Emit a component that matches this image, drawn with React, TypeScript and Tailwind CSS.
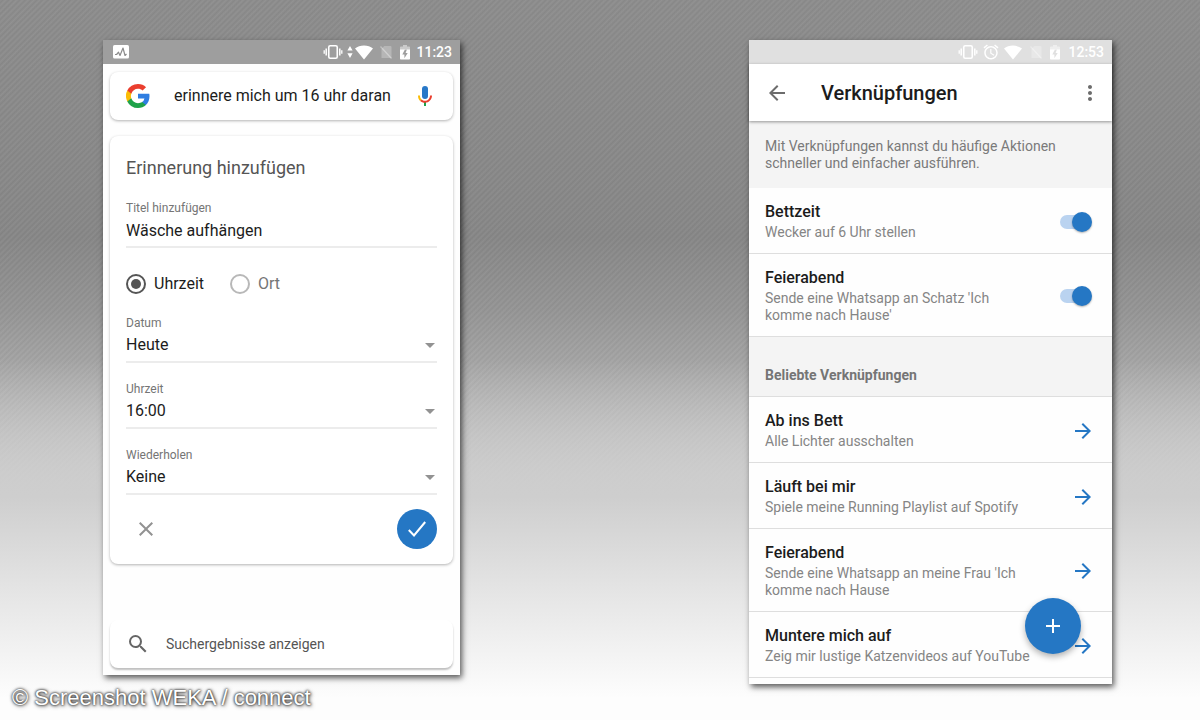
import type { ReactNode } from "react";
import {
  MdAdd,
  MdAlarm,
  MdArrowBack,
  MdArrowForward,
  MdClose,
  MdMoreVert,
  MdSearch,
} from "react-icons/md";

function GoogleIcon() {
  return (
    <svg width="24" height="24" viewBox="0 0 24 24" className="shrink-0" aria-hidden="true">
      <path
        fill="#2f7de1"
        d="M23.500 12.270c0-.85-.08-1.670-.22-2.450H12v4.640h6.450a5.520 5.520 0 0 1-2.400 3.620v3.010h3.880c2.270-2.090 3.570-5.170 3.570-8.820Z"
      />
      <path
        fill="#1fa24a"
        d="M12 24c3.240 0 5.960-1.070 7.940-2.910l-3.880-3.010c-1.070.72-2.450 1.150-4.060 1.150-3.130 0-5.780-2.110-6.720-4.950H1.270v3.110A12 12 0 0 0 12 24Z"
      />
      <path
        fill="#fbbc05"
        d="M5.280 14.280a7.200 7.200 0 0 1 0-4.570V6.600H1.270a12 12 0 0 0 0 10.790l4.010-3.110Z"
      />
      <path
        fill="#ea3e2e"
        d="M12 4.770c1.760 0 3.350.61 4.600 1.800l3.440-3.440C17.950 1.190 15.240 0 12 0A12 12 0 0 0 1.270 6.600l4.010 3.110C6.220 6.880 8.870 4.770 12 4.770Z"
      />
    </svg>
  );
}

function VibrationIcon() {
  return (
    <svg width="20" height="16" viewBox="0 0 20 16" fill="none" stroke="currentColor" aria-hidden="true">
      <rect x="5.75" y="1.75" width="8.500" height="12.500" rx="1.500" strokeWidth="1.600" />
      <path d="M3.200 4.500v7M16.800 4.500v7" strokeWidth="1.500" />
      <path d="M1.200 6.200v3.600M18.800 6.200v3.600" strokeWidth="1.300" />
    </svg>
  );
}

function DataArrowsIcon() {
  return (
    <svg width="6" height="14" viewBox="0 0 6 14" fill="currentColor" aria-hidden="true">
      <path d="M3 1 5.600 5.600H.4ZM3 13 .4 8.200h5.200Z" />
    </svg>
  );
}

function WifiIcon() {
  return (
    <svg width="18" height="15" viewBox="0 0 18 15" fill="currentColor" aria-hidden="true">
      <path d="M0 3.600C2.400 1.700 5.500.6 9 .6s6.600 1.100 9 3L9 14.600Z" />
    </svg>
  );
}

function NoSimIcon() {
  return (
    <svg width="12" height="14" viewBox="0 0 12 14" aria-hidden="true">
      <path d="M4.200 1H10.500Q11.500 1 11.500 2V13H1.500V4Z" fill="currentColor" opacity=".25" />
      <path d="M.5 1.500 11.500 13.500" stroke="currentColor" strokeWidth="1.300" opacity=".35" />
    </svg>
  );
}

function BatteryIcon() {
  return (
    <svg width="10" height="15" viewBox="0 0 10 15" aria-hidden="true">
      <path d="M3 0h4v1.500h2.200q.8 0 .8.8V5H0V2.300q0-.8.8-.8H3Z" fill="currentColor" opacity=".45" />
      <path
        fillRule="evenodd"
        d="M0 4.500h4.900L2.300 9.600h2.100v3.600L7.700 7.900H5.600L6.900 4.500H10v9.200q0 .8-.8.8H.8q-.8 0-.8-.8Z"
        fill="currentColor"
      />
    </svg>
  );
}

function ActivityIcon() {
  return (
    <svg width="16" height="14" viewBox="0 0 16 14" aria-hidden="true">
      <rect width="16" height="13.500" rx="1.600" fill="white" />
      <path
        d="M2 9.500h1.600L5.500 7.200 7 10.500 10 3l2 7.500 1.500-1.500"
        fill="none"
        stroke="#8c8c8c"
        strokeWidth="1.200"
        strokeLinejoin="round"
      />
    </svg>
  );
}

function MicIcon() {
  return (
    <svg width="24" height="24" viewBox="0 0 24 24" aria-hidden="true">
      <rect x="9" y="2" width="6" height="13" rx="3" fill="#2878c8" />
      <path d="M11 18h2v4h-2z" fill="#1fa24a" />
      <path d="M5 11.500h2c0 1.800.6 3.200 1.600 4.200l-1.400 1.400C5.800 15.800 5 13.900 5 11.500Z" fill="#fbbc05" />
      <path
        d="M17 11.500h2c0 4-3 7.200-7 7.200-1.900 0-3.600-.7-4.800-1.800l1.400-1.400c.9.800 2 1.300 3.400 1.300 2.900 0 5-2.300 5-5.300Z"
        fill="#ea3e2e"
      />
    </svg>
  );
}

function CheckIcon() {
  return (
    <svg width="20" height="20" viewBox="0 0 20 20" fill="none" stroke="currentColor" strokeWidth="2" aria-hidden="true">
      <path d="M1.800 11 7 16.500 18.200 3" />
    </svg>
  );
}

function CaretIcon() {
  return (
    <svg
      width="10"
      height="5"
      viewBox="0 0 10 5"
      className="pointer-events-none col-start-1 row-start-1 mr-0.5 self-center justify-self-end"
      aria-hidden="true"
    >
      <path d="M0 0h10L5 5Z" fill="#929292" />
    </svg>
  );
}

function SelectField({ id, label, options }: { id: string; label: string; options: string[] }) {
  return (
    <div className="flex flex-col">
      <label htmlFor={id} className="text-xs leading-4 text-[#757575]">
        {label}
      </label>
      <div className="mt-0.5 grid border-b-2 border-[#ececec] pb-1">
        <select
          id={id}
          className="col-start-1 row-start-1 h-6 appearance-none bg-transparent text-base leading-6 text-[#1c1c1c]"
        >
          {options.map((option) => (
            <option key={option}>{option}</option>
          ))}
        </select>
        <CaretIcon />
      </div>
    </div>
  );
}

function RadioOption({ label, checked }: { label: string; checked?: boolean }) {
  return (
    <label className="flex items-center gap-2 text-base leading-6 text-[#757575] has-checked:text-[#1c1c1c]">
      <input
        type="radio"
        name="trigger"
        defaultChecked={checked}
        className="grid size-5 appearance-none place-items-center rounded-full border-2 border-[#b8b8b8] before:size-2.5 before:rounded-full checked:border-[#555] checked:before:bg-[#555]"
      />
      {label}
    </label>
  );
}

function ReminderPhone() {
  return (
    <section className="w-full max-w-[357px] bg-[#fefefe] pb-[7px] shadow-[2px_3px_6px_rgba(0,0,0,0.65)]">
      <div className="flex h-6 items-center justify-between bg-[#9e9e9e] pr-2 pl-2.5 text-white">
        <ActivityIcon />
        <div className="flex items-center">
          <VibrationIcon />
          <span className="ml-1 flex items-center gap-0.5">
            <DataArrowsIcon />
            <WifiIcon />
          </span>
          <span className="ml-[7px] flex items-center gap-2">
            <NoSimIcon />
            <BatteryIcon />
          </span>
          <span className="ml-1.5 text-sm leading-6 font-medium">11:23</span>
        </div>
      </div>

      <div className="flex flex-col px-[7px] pt-2">
        <form className="flex h-12 items-center rounded-lg bg-white px-4 shadow-[0_1px_3px_rgba(0,0,0,0.3)]">
          <GoogleIcon />
          <input
            aria-label="Suche"
            defaultValue="erinnere mich um 16 uhr daran"
            className="ml-6 min-w-0 flex-1 bg-transparent text-base text-[#1c1c1c] outline-none"
          />
          <button type="button" aria-label="Spracheingabe" className="shrink-0">
            <MicIcon />
          </button>
        </form>

        <form className="mt-4 rounded-lg bg-white px-4 pt-5 pb-[15px] shadow-[0_1px_3px_rgba(0,0,0,0.3)]">
          <h2 className="text-lg leading-6 text-[#555]">Erinnerung hinzufügen</h2>
          <div className="mt-5 flex flex-col">
            <label htmlFor="reminder-title" className="text-xs leading-4 text-[#757575]">
              Titel hinzufügen
            </label>
            <input
              id="reminder-title"
              defaultValue="Wäsche aufhängen"
              className="mt-0.5 h-[30px] w-full border-b-2 border-[#ececec] bg-transparent pb-1 text-base leading-6 text-[#1c1c1c] outline-none"
            />
          </div>
          <div className="mt-6 mb-[19px] flex gap-[26px]">
            <RadioOption label="Uhrzeit" checked />
            <RadioOption label="Ort" />
          </div>
          <div className="flex flex-col gap-[18px]">
            <SelectField id="date" label="Datum" options={["Heute", "Morgen"]} />
            <SelectField id="time" label="Uhrzeit" options={["16:00", "18:00"]} />
            <SelectField id="repeat" label="Wiederholen" options={["Keine", "Täglich"]} />
          </div>
          <div className="mt-3.5 flex items-center justify-between pl-2 text-[#929292]">
            <button type="button" aria-label="Abbrechen">
              <MdClose className="size-6" />
            </button>
            <button
              type="button"
              aria-label="Speichern"
              className="grid size-10 place-items-center rounded-full bg-[#2577c4] text-white"
            >
              <CheckIcon />
            </button>
          </div>
        </form>

        <button
          type="button"
          className="mt-14 flex h-12 items-center gap-4 rounded-lg bg-white px-4 text-sm text-[#555] shadow-[0_2px_2px_rgba(0,0,0,0.25)]"
        >
          <MdSearch className="size-6 text-[#666]" />
          Suchergebnisse anzeigen
        </button>
      </div>
    </section>
  );
}

function ShortcutRow({ title, text, children }: { title: string; text: string; children: ReactNode }) {
  return (
    <li className="flex items-center justify-between gap-6 border-b border-[#dedede] pt-3.5 pr-[17px] pb-3 pl-4">
      <div className="max-w-[270px]">
        <h3 className="text-base leading-5 font-medium text-[#1c1c1c]">{title}</h3>
        <p className="mt-0.5 text-sm leading-[17px] text-[#858585]">{text}</p>
      </div>
      {children}
    </li>
  );
}

function Toggle({ label }: { label: string }) {
  return (
    <input
      type="checkbox"
      role="switch"
      aria-label={label}
      defaultChecked
      className="mr-[3px] flex h-5 w-8 shrink-0 appearance-none items-center rounded-full before:h-3.5 before:w-6 before:rounded-full before:bg-[#bad3f0] after:-ml-3 after:size-5 after:rounded-full after:bg-[#2577c4] after:shadow-[0_1px_2px_rgba(0,0,0,0.3)]"
    />
  );
}

const activeShortcuts = [
  { title: "Bettzeit", text: "Wecker auf 6 Uhr stellen" },
  { title: "Feierabend", text: "Sende eine Whatsapp an Schatz 'Ich komme nach Hause'" },
];

const popularShortcuts = [
  { title: "Ab ins Bett", text: "Alle Lichter ausschalten" },
  { title: "Läuft bei mir", text: "Spiele meine Running Playlist auf Spotify" },
  { title: "Feierabend", text: "Sende eine Whatsapp an meine Frau 'Ich komme nach Hause" },
  { title: "Muntere mich auf", text: "Zeig mir lustige Katzenvideos auf YouTube" },
];

function ShortcutsPhone() {
  return (
    <section className="relative w-full max-w-[363px] bg-[#fefefe] pb-1.5 shadow-[2px_3px_6px_rgba(0,0,0,0.65)]">
      <div className="flex h-6 items-center justify-end bg-[#e0e0e0] pr-2 text-white">
        <VibrationIcon />
        <MdAlarm className="ml-1 size-[18px]" />
        <span className="ml-1 flex">
          <WifiIcon />
        </span>
        <span className="ml-2 flex items-center gap-2">
          <NoSimIcon />
          <BatteryIcon />
          <span className="text-sm leading-6 font-medium">12:53</span>
        </span>
      </div>

      <header className="relative flex h-[57px] items-center bg-white pr-2.5 pl-4 shadow-[0_1px_3px_rgba(0,0,0,0.4)]">
        <button type="button" aria-label="Zurück">
          <MdArrowBack className="size-6 text-[#6c6c6c]" />
        </button>
        <h1 className="ml-8 flex-1 text-xl leading-6 font-medium text-[#1c1c1c]">Verknüpfungen</h1>
        <button type="button" aria-label="Weitere Optionen">
          <MdMoreVert className="size-6 text-[#6c6c6c]" />
        </button>
      </header>

      <p className="bg-[#f4f4f4] px-4 pt-[17px] pb-4 text-sm leading-[17px] text-[#7a7a7a]">
        Mit Verknüpfungen kannst du häufige Aktionen schneller und einfacher ausführen.
      </p>

      <ul>
        {activeShortcuts.map((item) => (
          <ShortcutRow key={item.title} title={item.title} text={item.text}>
            <Toggle label={item.title} />
          </ShortcutRow>
        ))}
      </ul>

      <h2 className="border-b border-[#dedede] bg-[#f4f4f4] px-4 pt-[30px] pb-3 text-sm leading-[17px] font-bold text-[#757575]">
        Beliebte Verknüpfungen
      </h2>

      <ul>
        {popularShortcuts.map((item) => (
          <ShortcutRow key={item.title} title={item.title} text={item.text}>
            <button type="button" aria-label={item.title} className="shrink-0">
              <MdArrowForward className="size-6 text-[#2577c4]" />
            </button>
          </ShortcutRow>
        ))}
      </ul>

      <button
        type="button"
        aria-label="Verknüpfung hinzufügen"
        className="absolute right-[31px] bottom-[30px] grid size-14 place-items-center rounded-full bg-[#2577c4] text-white shadow-[0_3px_6px_rgba(0,0,0,0.3)]"
      >
        <MdAdd className="size-6" />
      </button>
    </section>
  );
}

export default function App() {
  return (
    <div className="flex min-h-screen flex-col bg-[linear-gradient(to_bottom,rgba(180,180,180,0)_50%,#cecece_69%,#e6e6e6_83%,#fdfdfd_97%),repeating-linear-gradient(135deg,rgba(255,255,255,0.05)_0px,rgba(0,0,0,0.03)_2px,rgba(255,255,255,0.05)_4px),linear-gradient(to_bottom,#8c8c8c_0%,#868686_33%,#949494_43%,#b0b0b0_56%,#cecece_69%)] font-[Roboto,sans-serif]">
      <main className="flex items-start justify-between gap-10 pt-10 pr-[88px] pl-[103px]">
        <ReminderPhone />
        <ShortcutsPhone />
      </main>
      <footer className="px-3 font-['Liberation_Sans',sans-serif] text-[22px] leading-7 text-white [text-shadow:0_0_2px_#333,0_0_3px_#444,1px_1px_4px_#555]">
        © Screenshot WEKA / connect
      </footer>
    </div>
  );
}
